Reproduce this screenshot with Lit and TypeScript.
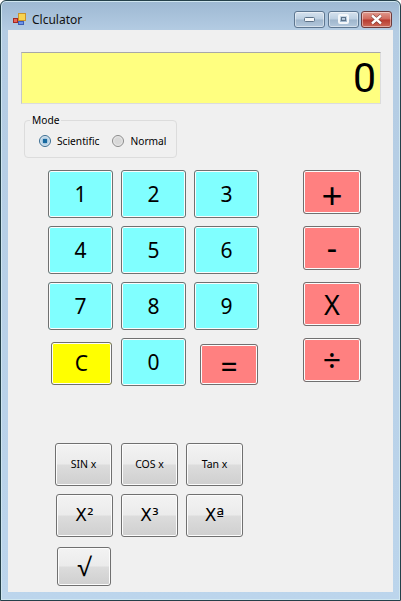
import { LitElement, html, css } from "lit";
import { customElement } from "lit/decorators.js";

@customElement("app-root")
export class AppRoot extends LitElement {
  static styles = css`
    :host { display: block; width: 401px; height: 601px; background: #fff; font-family: "Noto Sans", "Open Sans", sans-serif; color: #000; overflow: hidden; }
    * { box-sizing: border-box; }
    .window { width: 401px; height: 601px; display: flex; flex-direction: column; border: 1px solid #24404a; border-radius: 6px 6px 0 0; background: linear-gradient(180deg, #9db8d2 0%, #b4cce3 5%, #bcd5ec 100%); box-shadow: inset 0 0 0 1px #cfe6f0; }
    .title { height: 29px; display: flex; align-items: center; padding: 7px 1px 0 12px; flex: none; }
    .title .ico { display: block; flex: none; margin-right: 6px; }
    .title .name { font-size: 12px; flex: 1; color: #111; }
    .ctl { height: 17px; display: flex; align-items: center; justify-content: center; border: 1px solid #5d7690; border-radius: 3px; background: linear-gradient(180deg, #d6e2ee 0%, #bccfe1 48%, #9fb6cc 52%, #b3c8dc 100%); box-shadow: inset 0 0 0 1px rgba(255,255,255,.45); width: 31px; margin-left: 3px; }
    .ctl.close { background: linear-gradient(180deg, #e09a8e 0%, #d0695c 48%, #b83a2e 52%, #cc6a5a 100%); border-color: #6d3a3a; margin-left: 2px; margin-right: 7px;}
    .ctl svg { display: block; }
    .client { flex: 1; margin: 0 7px 8px 7px; background: #f0f0f0; padding: 22px 0 0 13px; display: flex; flex-direction: column; min-height: 0; }
    .display { width: 360px; height: 52px; flex: none; background: #ffff80; border: 1px solid #dcdcdc; border-top-color: #a8a8a8; border-left-color: #c8c8c8; display: flex; justify-content: flex-end; align-items: center; padding-right: 4px; font-family: Roboto, sans-serif; font-weight: 400; font-size: 41px; line-height: 1; }
    .group { width: 153px; height: 44px; margin: 10px 0 0 3px; padding: 8px 0 0 14px; border: 1px solid #dcdcdc; border-radius: 4px; display: flex; align-items: center; flex: none; font-size: 10.2px; }
    legend { margin-left: -9px; padding: 0 2px; font-size: 10.2px; line-height: 12px; }
    .radio { display: flex; align-items: center; }
    .radio .dot { width: 12px; height: 12px; border-radius: 50%; border: 1px solid #8a8a8a; background: radial-gradient(circle, #d8d8d8 0 45%, #f4f4f4 80%); margin-right: 6px; flex: none; }
    .radio.on .dot { background: radial-gradient(circle, #17699f 0 30%, #a4c6de 36%, #e8f0f6 75%); border-color: #3a6d92; }
    .radio + .radio { margin-left: 13px; }
    .pad { display: flex; margin: 12px 0 0 27px; flex: none; }
    .digits { display: grid; grid-template-columns: repeat(3, 65px); grid-auto-rows: 48px; gap: 8px; width: 211px; }
    .ops { display: flex; flex-direction: column; gap: 12px; margin-left: 44px; }
    button { font-family: inherit; color: #000; padding: 0; margin: 0; border: 1px solid #707070; border-radius: 3px; display: flex; align-items: center; justify-content: center; box-shadow: inset 0 0 0 1px #fcfcfc; line-height: 1; }
    .cy, .red, .yel { font-size: 21px; }
    .cy { background: #80ffff; }
    .red { background: #ff8080; }
    .yel { background: #ffff00; }
    .op { width: 58px; height: 44px; font-size: 32px; }
    .op.plus { font-size: 37px; padding-top: 4px; }
    .op.x { font-size: 27px; }
    .btn-c { width: 61px; height: 43px; justify-self: start; align-self: end; margin: 0 0 1px 3px; }
    .btn-eq { width: 58px; height: 41px; font-size: 30px; padding-top: 5px; justify-self: end; align-self: end; margin: 0 1px 1px 0; }
    .sci { display: grid; grid-template-columns: 66px 65px 57px; margin: 57px 0 0 34px; row-gap: 8px; flex: none; }
    .sci button { width: 57px; height: 43px; background: linear-gradient(180deg, #f3f3f3 0%, #ebebeb 48%, #dcdcdc 52%, #cfcfcf 100%); font-size: 10.5px; }
    .sci button.big { font-family: "DejaVu Sans", sans-serif; font-size: 17px; }
    .sci .root { width: 54px; height: 39px; font-size: 25px; margin-left: 2px; margin-top: 2px; }
    .sci .nudge { margin-left: 1px; }
  `;

  render() {
    return html`
      <div class="window">
        <div class="title">
          <svg class="ico" width="13" height="13" viewBox="0 0 13 13">
            <rect x="0.5" y="5.5" width="4" height="4" fill="#e8665a" stroke="#a52a20"/>
            <rect x="5.5" y="0.5" width="7" height="7" fill="#f7d34f" stroke="#c9932a"/>
            <rect x="5.5" y="8.5" width="5" height="3" fill="#6e93e6" stroke="#3d5fb6"/>
          </svg>
          <span class="name">Clculator</span>
          <span class="ctl"><svg width="11" height="5" viewBox="0 0 11 5"><rect x=".5" y=".5" width="10" height="4" rx="1" fill="#f4f7fa" stroke="#5d7288"/></svg></span>
          <span class="ctl"><svg width="11" height="10" viewBox="0 0 11 10"><rect x="1" y="1" width="9" height="8" rx="1" fill="none" stroke="#f4f7fa" stroke-width="2"/><rect x="3.5" y="3.5" width="4" height="3" fill="none" stroke="#5d7288"/></svg></span>
          <span class="ctl close"><svg width="13" height="11" viewBox="0 0 13 11"><path d="M2 1.5 11 9.5M11 1.5 2 9.5" stroke="#6d2a24" stroke-width="3.6" fill="none"/><path d="M2 1.5 11 9.5M11 1.5 2 9.5" stroke="#fff" stroke-width="2.4" fill="none"/></svg></span>
        </div>
        <div class="client">
          <div class="display">0</div>
          <fieldset class="group">
            <legend>Mode</legend>
            <span class="radio on"><span class="dot"></span>Scientific</span>
            <span class="radio"><span class="dot"></span>Normal</span>
          </fieldset>
          <div class="pad">
            <div class="digits">
              ${["1","2","3","4","5","6","7","8","9"].map((d) => html`<button class="cy">${d}</button>`)}
              <button class="yel btn-c">C</button>
              <button class="cy">0</button>
              <button class="red btn-eq">=</button>
            </div>
            <div class="ops">
              <button class="red op plus">+</button>
              <button class="red op">-</button>
              <button class="red op x">X</button>
              <button class="red op">÷</button>
            </div>
          </div>
          <div class="sci">
            <button>SIN x</button>
            <button>COS x</button>
            <button>Tan x</button>
            <button class="big nudge">X²</button>
            <button class="big">X³</button>
            <button class="big">Xª</button>
            <button class="root">√</button>
          </div>
        </div>
      </div>
    `;
  }
}
